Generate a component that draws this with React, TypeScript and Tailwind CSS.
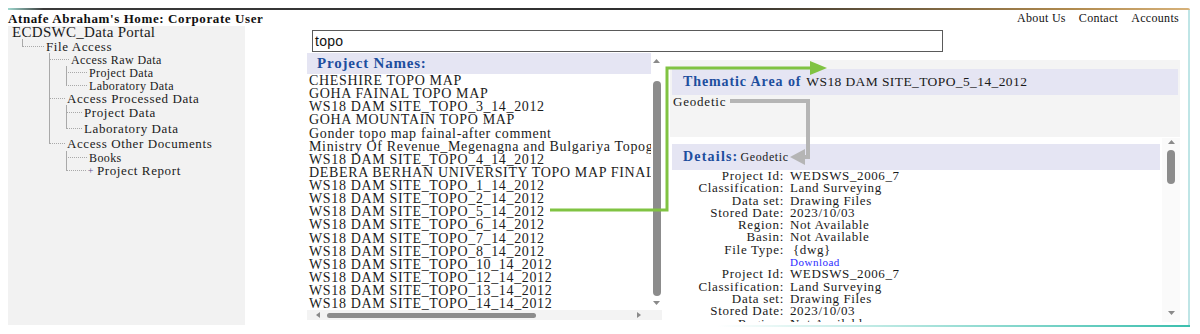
import React from "react";

const LINE = "border-[#a9a9a9]";

const Tee = ({ w }: { w: string }) => (
  <div className={`${w} shrink-0 flex flex-col`}>
    <div className={`flex-1 border-l border-b ${LINE} [border-bottom-style:dotted]`} />
    <div className={`flex-1 border-l ${LINE}`} />
  </div>
);
const Ell = ({ w }: { w: string }) => (
  <div className={`${w} shrink-0 flex flex-col`}>
    <div className={`flex-1 border-l border-b ${LINE} [border-bottom-style:dotted]`} />
    <div className="flex-1" />
  </div>
);
const Pipe = ({ w }: { w: string }) => <div className={`${w} shrink-0 border-l ${LINE}`} />;
const Gap = ({ w }: { w: string }) => <div className={`${w} shrink-0`} />;

const Up = () => (
  <svg width="7" height="4" viewBox="0 0 7 4" className="block">
    <path d="M0 4 L3.5 0 L7 4Z" fill="#8a8a8a" />
  </svg>
);
const Down = () => (
  <svg width="7" height="4" viewBox="0 0 7 4" className="block">
    <path d="M0 0 L3.5 4 L7 0Z" fill="#8a8a8a" />
  </svg>
);
const Left = () => (
  <svg width="4" height="6" viewBox="0 0 4 6" className="block">
    <path d="M4 0 L0 3 L4 6Z" fill="#8a8a8a" />
  </svg>
);
const Right = () => (
  <svg width="4" height="6" viewBox="0 0 4 6" className="block">
    <path d="M0 0 L4 3 L0 6Z" fill="#8a8a8a" />
  </svg>
);

const projects = [
  "CHESHIRE TOPO MAP",
  "GOHA FAINAL TOPO MAP",
  "WS18 DAM SITE_TOPO_3_14_2012",
  "GOHA MOUNTAIN TOPO MAP",
  "Gonder topo map fainal-after comment",
  "Ministry Of Revenue_Megenagna and Bulgariya Topographic Map",
  "WS18 DAM SITE_TOPO_4_14_2012",
  "DEBERA BERHAN UNIVERSITY TOPO MAP FINAL",
  "WS18 DAM SITE_TOPO_1_14_2012",
  "WS18 DAM SITE_TOPO_2_14_2012",
  "WS18 DAM SITE_TOPO_5_14_2012",
  "WS18 DAM SITE_TOPO_6_14_2012",
  "WS18 DAM SITE_TOPO_7_14_2012",
  "WS18 DAM SITE_TOPO_8_14_2012",
  "WS18 DAM SITE_TOPO_10_14_2012",
  "WS18 DAM SITE_TOPO_12_14_2012",
  "WS18 DAM SITE_TOPO_13_14_2012",
  "WS18 DAM SITE_TOPO_14_14_2012",
];

type Row = { label: string; value: string; link?: boolean; vcls?: string };
const details: Row[] = [
  { label: "Project Id:", value: "WEDSWS_2006_7" },
  { label: "Classification:", value: "Land Surveying" },
  { label: "Data set:", value: "Drawing Files" },
  { label: "Stored Date:", value: "2023/10/03" },
  { label: "Region:", value: "Not Available" },
  { label: "Basin:", value: "Not Available" },
  { label: "File Type:", value: "{dwg}", vcls: "pl-[9px]" },
  { label: "", value: "Download", link: true },
  { label: "Project Id:", value: "WEDSWS_2006_7" },
  { label: "Classification:", value: "Land Surveying" },
  { label: "Data set:", value: "Drawing Files" },
  { label: "Stored Date:", value: "2023/10/03" },
  { label: "Region:", value: "Not Available" },
  { label: "Basin:", value: "Not Available" },
];

const small = "self-center leading-none text-[12px] tracking-[0.4px] ml-[2px] whitespace-nowrap";
const big = "self-center leading-none text-[13px] tracking-[0.6px] ml-[2px] whitespace-nowrap";

export default function App() {
  return (
    <div className="relative w-[1200px] h-[334px] bg-white overflow-hidden [font-family:'Liberation_Serif','Times_New_Roman',serif] text-[#1a1a1a]">
      <div className="pl-[8px] pt-[8px] w-[1190px]">
        <div className="h-[2px] rounded-tr-[4px] bg-[linear-gradient(to_right,#9fd8cf_0%,#3a3a3a_3%,#2e2e2e_60%,#b08a4e_90%,#d7b27a_100%)]" />
        <div className="border-r-2 border-[#bfe5e6]">
          {/* header */}
          <div className="h-[16px] flex items-center justify-between pr-[9px]">
            <div className="font-bold text-[13px] tracking-[0.6px] leading-none text-[#111] whitespace-nowrap">
              Atnafe Abraham's Home: Corporate User
            </div>
            <div className="flex gap-[13px] text-[12px] tracking-[0.3px] leading-none text-[#111] whitespace-nowrap">
              <span>About Us</span>
              <span>Contact</span>
              <span>Accounts</span>
            </div>
          </div>
          {/* body */}
          <div className="flex h-[299px]">
            {/* sidebar */}
            <div className="w-[237px] h-full bg-[#f2f2f2] shrink-0">
              <div className="flex h-[13px] items-center pl-[4px] text-[15px] tracking-[0.3px] leading-none whitespace-nowrap">
                ECDSWC_Data Portal
              </div>
              <div className="flex h-[14px] pl-[14px]">
                <Ell w="w-[22px]" />
                <span className={big}>File Access</span>
              </div>
              <div className="flex h-[13px] pl-[41px]">
                <Tee w="w-[20px]" />
                <span className={small}>Access Raw Data</span>
              </div>
              <div className="flex h-[13px] pl-[41px]">
                <Pipe w="w-[17px]" />
                <Tee w="w-[21px]" />
                <span className={small}>Project Data</span>
              </div>
              <div className="flex h-[13px] pl-[41px]">
                <Pipe w="w-[17px]" />
                <Ell w="w-[21px]" />
                <span className={small}>Laboratory Data</span>
              </div>
              <div className="flex h-[13px] pl-[41px]">
                <Tee w="w-[16px]" />
                <span className={big}>Access Processed Data</span>
              </div>
              <div className="flex h-[15px] pl-[41px]">
                <Pipe w="w-[17px]" />
                <Tee w="w-[16px]" />
                <span className={big}>Project Data</span>
              </div>
              <div className="flex h-[16px] pl-[41px]">
                <Pipe w="w-[17px]" />
                <Ell w="w-[16px]" />
                <span className={big}>Laboratory Data</span>
              </div>
              <div className="flex h-[15px] pl-[41px]">
                <Ell w="w-[16px]" />
                <span className={big}>Access Other Documents</span>
              </div>
              <div className="flex h-[13px] pl-[41px]">
                <Gap w="w-[17px]" />
                <Tee w="w-[21px]" />
                <span className={small}>Books</span>
              </div>
              <div className="flex h-[13px] pl-[41px]">
                <Gap w="w-[17px]" />
                <Ell w="w-[20px]" />
                <span className="self-center w-[9px] text-center text-[10px] leading-none text-[#5b4a8c]">+</span>
                <span className={big}>Project Report</span>
              </div>
            </div>

            {/* main */}
            <div className="flex-1 flex flex-col">
              <div className="mt-[4px] ml-[67px] w-[631px] h-[22px] border border-[#5a5a5a] flex items-center pl-[2px] [font-family:'Liberation_Sans',Arial,sans-serif] text-[14px] tracking-[0.3px] text-[#111] leading-none">
                topo
              </div>
              <div className="mt-[1px] flex">
                {/* center column */}
                <div className="ml-[62px] w-[355px] flex flex-col shrink-0">
                  <div className="flex">
                    <div className="w-[344px] overflow-hidden">
                      <div className="h-[21px] bg-[#e5e5f3] flex items-center pl-[10px] font-bold text-[15px] tracking-[0.8px] text-[#1d4e9e] leading-none">
                        Project Names:
                      </div>
                      <div className="pl-[2px]">
                        {projects.map((p, i) => (
                          <div key={i} className="h-[13.13px] leading-[13.13px] text-[14px] tracking-[0.65px] whitespace-nowrap text-[#1c1c1c]">
                            {p}
                          </div>
                        ))}
                      </div>
                    </div>
                    <div className="w-[11px] flex flex-col items-center pt-[6px]">
                      <Up />
                      <div className="mt-[18px] w-[8px] h-[215px] rounded-full bg-[#8c8c8c]" />
                      <div className="mt-[5px]">
                        <Down />
                      </div>
                    </div>
                  </div>
                  <div className="h-[10px] flex items-center bg-[#f3f3f3] pl-[9px] pr-[21px]">
                    <Left />
                    <div className="ml-[7px] w-[209px] h-[5px] rounded-full bg-[#8c8c8c]" />
                    <div className="flex-1" />
                    <Right />
                  </div>
                </div>

                {/* right panel */}
                <div className="ml-[8px] w-[510px] shrink-0 flex flex-col">
                  <div className="mt-[7px] h-[77px] bg-[#f4f4f4] pt-[9px] px-[2px]">
                    <div className="h-[26px] bg-[#e5e5f3] flex items-center pl-[11px] leading-none whitespace-nowrap">
                      <span className="font-bold text-[14px] tracking-[0.9px] text-[#1d4e9e]">Thematic Area of</span>
                      <span className="ml-[5px] text-[13.5px] tracking-[0.4px]">WS18 DAM SITE_TOPO_5_14_2012</span>
                    </div>
                    <div className="h-[14px] leading-[14px] pl-[1px] text-[13px] tracking-[0.8px]">Geodetic</div>
                  </div>
                  <div className="mt-[1px] h-[184px] flex bg-white">
                    <div className="flex-1 overflow-hidden pt-[6px] px-[2px]">
                      <div className="h-[26px] bg-[#e5e5f3] flex items-center pl-[11px] leading-none whitespace-nowrap">
                        <span className="font-bold text-[14px] tracking-[1.2px] text-[#1d4e9e]">Details:</span>
                        <span className="ml-[2px] text-[12px] tracking-[0.6px]">Geodetic</span>
                      </div>
                      {details.map((r, i) => (
                        <div key={i} className="flex h-[12.3px] leading-[12.3px] whitespace-nowrap">
                          <div className="w-[112px] text-right text-[13px] tracking-[0.7px]">{r.label}</div>
                          {r.link ? (
                            <div className="pl-[6px] text-[11px] tracking-[0.5px] text-[#2a2aff]">{r.value}</div>
                          ) : (
                            <div className={`${r.vcls ?? "pl-[6px]"} text-[13px] tracking-[0.6px]`}>{r.value}</div>
                          )}
                        </div>
                      ))}
                    </div>
                    <div className="w-[18px] flex flex-col items-center pt-[2px] pb-[7px] bg-[#fafafa]">
                      <Up />
                      <div className="mt-[6px] w-[8px] h-[34px] rounded-full bg-[#8c8c8c]" />
                      <div className="flex-1" />
                      <Down />
                    </div>
                  </div>
                </div>
              </div>
            </div>
          </div>
        </div>
        <div className="h-[2px] bg-[linear-gradient(to_right,rgba(60,190,170,0)_0%,rgba(60,190,170,0)_60%,#3cbfae_100%)]" />
      </div>

      {/* overlay arrows */}
      <svg className="absolute left-0 top-0 pointer-events-none" width="1200" height="334" viewBox="0 0 1200 334">
        <polyline points="550,210 667,210 667,68 812,68" fill="none" stroke="#80c342" strokeWidth="3" strokeLinejoin="miter" />
        <polygon points="810,61 827,68 810,75" fill="#80c342" />
        <polyline points="730,101 808,101 808,157 803,157" fill="none" stroke="#b5b5b5" strokeWidth="4" strokeLinejoin="miter" />
        <polygon points="790,157 805,149 805,165" fill="#b5b5b5" />
      </svg>
    </div>
  );
}
